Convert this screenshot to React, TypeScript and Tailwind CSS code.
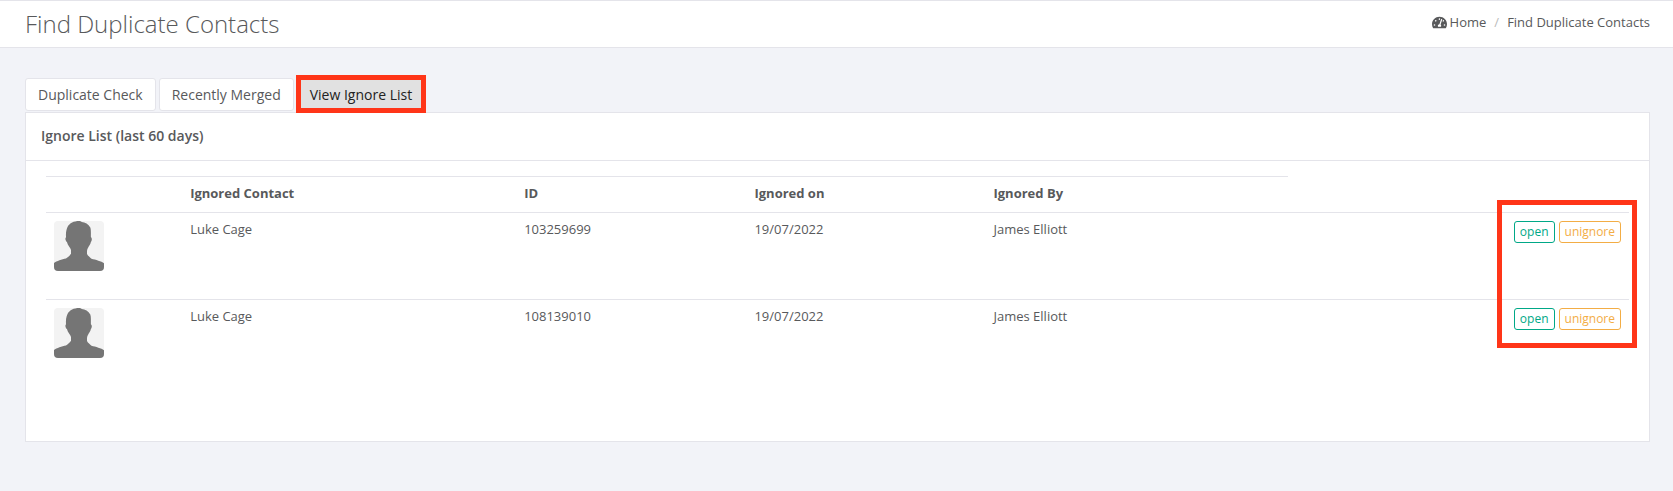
import React from 'react';
import { FaTachometerAlt } from 'react-icons/fa';
import clsx from 'clsx';

type IgnoredContact = {
  id: string;
  name: string;
  ignoredOn: string;
  ignoredBy: string;
};

const contacts: IgnoredContact[] = [
  { id: '103259699', name: 'Luke Cage', ignoredOn: '19/07/2022', ignoredBy: 'James Elliott' },
  { id: '108139010', name: 'Luke Cage', ignoredOn: '19/07/2022', ignoredBy: 'James Elliott' },
];

const tabs = ['Duplicate Check', 'Recently Merged', 'View Ignore List'];

const cell = 'border-t border-[#e4e4ea] px-2 pt-[7px] pb-[9px]';

const Avatar = () => (
  <svg className="block size-[50px] rounded" viewBox="0 0 50 50" role="img" aria-label="Contact photo">
    <rect width="50" height="50" fill="#f3f3f3" />
    <path
      fill="#757575"
      d="M25 0C26 0 27 .3 27.7 1.1C31 1.5 34.5 3 36.3 6.5C37.2 9 36.8 13 36.9 16.2C38.3 17 38 20 36.8 21.3C36.2 24.5 33.2 26.5 33 30.5V33C34 35 36 36.3 37.5 37.7C41.5 38.7 47.5 40.2 50 42.2V50H0V42C2.5 40.2 8 38.5 12 37.6C13.8 36.2 16 34.5 17 32.8V29C16.5 26.5 13.7 24.8 13 21.3C11.5 20 10.8 17.3 12 16.2C11.8 12 12 9.5 13.5 6C15.5 2 20 0 25 0Z"
    />
  </svg>
);

const App = () => {
  const [activeTab, setActiveTab] = React.useState('View Ignore List');

  return (
    <div className="min-h-screen bg-[#f2f3f8] font-['Open_Sans',sans-serif] text-[13px] text-[#58595b]">
      <header className="flex items-start justify-between border-y border-[#e4e4ea] bg-white pr-[23px] pl-[25px]">
        <h1 className="text-2xl font-light leading-[46px]">Find Duplicate Contacts</h1>
        <nav aria-label="Breadcrumb" className="pt-[11px] leading-5">
          <ol className="flex">
            <li>
              <a href="#home" className="flex items-center gap-[3px]">
                <FaTachometerAlt size={15} />
                Home
              </a>
            </li>
            <li className="px-2 text-[#bbbbbb]" aria-hidden="true">/</li>
            <li>Find Duplicate Contacts</li>
          </ol>
        </nav>
      </header>

      <main className="pt-[30px] pr-[23px] pb-12 pl-[25px]">
        <div className="flex gap-[3px] pb-px" role="tablist">
          {tabs.map(tab => {
            const isActive = tab === activeTab;
            return (
              <div key={tab} className="relative">
                <button
                  type="button"
                  role="tab"
                  aria-selected={isActive}
                  onClick={() => setActiveTab(tab)}
                  className={clsx(
                    'block h-[33px] rounded-[3px] border border-[#e4e4ea] px-3 text-sm',
                    isActive ? 'bg-[#e1e1e1] text-[#222222]' : 'bg-white'
                  )}
                >
                  {tab}
                </button>
                {isActive && (
                  <div className="pointer-events-none absolute -inset-x-px -top-[3px] -bottom-[2px] border-5 border-[#ff3518]" />
                )}
              </div>
            );
          })}
        </div>

        <section className="border border-[#e4e4ea] bg-white">
          <h2 className="border-b border-[#e4e4ea] px-[15px] pb-0.5 text-sm font-semibold leading-[45px]">
            Ignore List (last 60 days)
          </h2>
          <div className="px-5 pt-[15px] pb-[55px]">
            <div className="relative">
              <table className="w-full table-fixed border-separate border-spacing-0 text-left leading-[19px]">
                <colgroup>
                  <col className="w-[8.6%]" />
                  <col className="w-[21.1%]" />
                  <col className="w-[14.55%]" />
                  <col className="w-[15.1%]" />
                  <col className="w-[19.1%]" />
                  <col />
                </colgroup>
                <thead>
                  <tr>
                    <th className={cell} aria-label="Photo" />
                    <th className={cell}>Ignored Contact</th>
                    <th className={cell}>ID</th>
                    <th className={cell}>Ignored on</th>
                    <th className={cell}>Ignored By</th>
                  </tr>
                </thead>
                <tbody>
                  {contacts.map(contact => (
                    <tr key={contact.id} className="h-[87px] align-top">
                      <td className="border-t border-[#e4e4ea] p-2"><Avatar /></td>
                      <td className={cell}>{contact.name}</td>
                      <td className={cell}>{contact.id}</td>
                      <td className={cell}>{contact.ignoredOn}</td>
                      <td className={cell}>{contact.ignoredBy}</td>
                      <td className="border-t border-[#e4e4ea] p-2">
                        <div className="flex justify-end gap-1 text-xs">
                          <button type="button" className="h-[22px] rounded-[3px] border border-[#00a887] px-[5px] text-[#00a887]">
                            open
                          </button>
                          <button type="button" className="h-[22px] rounded-[3px] border border-[#f3ad45] px-[5px] text-[#f3ad45]">
                            unignore
                          </button>
                        </div>
                      </td>
                    </tr>
                  ))}
                </tbody>
              </table>
              <div className="pointer-events-none absolute top-6 -right-2 h-[148px] w-[140px] border-5 border-[#ff3518]" />
            </div>
          </div>
        </section>
      </main>
    </div>
  );
};

export default App;
